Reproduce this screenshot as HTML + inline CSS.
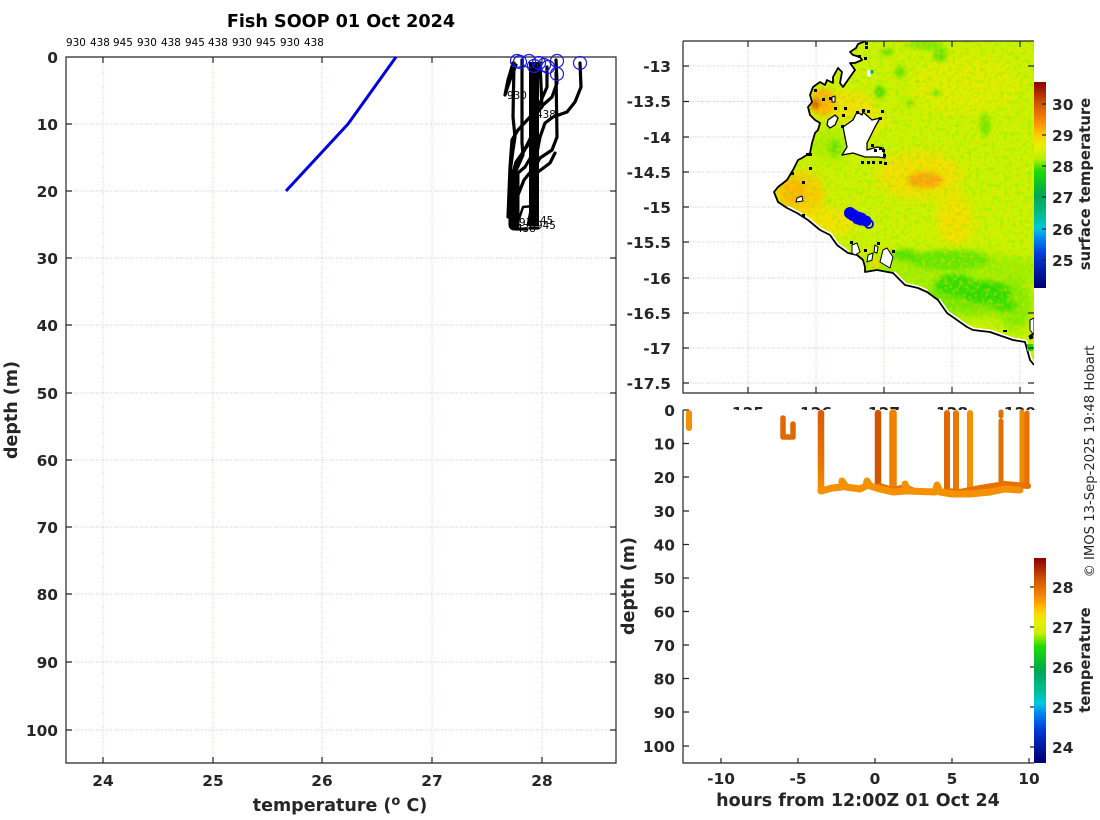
<!DOCTYPE html>
<html><head><meta charset="utf-8"><style>
html,body{margin:0;padding:0;background:#fff}
svg{display:block}
text{font-family:"DejaVu Sans","Liberation Sans",sans-serif}
.t{font-weight:bold;font-size:15.4px;fill:#262626}
.l{font-weight:bold;font-size:17.5px;fill:#262626}
.s{font-size:10.4px;fill:#000}
.gb{stroke:#b9c9f2;stroke-width:1;stroke-dasharray:1 1.5;fill:none}
.go{stroke:#eac8b4;stroke-width:1;stroke-dasharray:1 1.5;fill:none}
.ax{stroke:#262626;stroke-width:1.2;fill:none}
.p{fill:none;stroke:#000;stroke-width:3.2;stroke-linejoin:round;stroke-linecap:round}
.c{fill:none;stroke:#1a1ae6;stroke-width:1.2}
.o{fill:none;stroke-width:5;stroke-linecap:round;stroke-linejoin:round}
</style></head><body>
<svg width="1100" height="820" viewBox="0 0 1100 820" xmlns="http://www.w3.org/2000/svg">
<defs>
<linearGradient id="jet" x1="0" y1="0" x2="0" y2="1">
<stop offset="0" stop-color="#8b0000"/><stop offset=".1" stop-color="#d05000"/><stop offset=".2" stop-color="#ff9000"/><stop offset=".26" stop-color="#ffd000"/><stop offset=".31" stop-color="#e8f000"/><stop offset=".37" stop-color="#c0f000"/><stop offset=".43" stop-color="#20dc00"/><stop offset=".55" stop-color="#00a850"/><stop offset=".66" stop-color="#00c0a0"/><stop offset=".71" stop-color="#00c8e0"/><stop offset=".75" stop-color="#0090f0"/><stop offset=".83" stop-color="#0040e0"/><stop offset=".92" stop-color="#0018a0"/><stop offset="1" stop-color="#000070"/>
</linearGradient>
<linearGradient id="v1" gradientUnits="userSpaceOnUse" x1="0" y1="411" x2="0" y2="492"><stop offset="0" stop-color="#d85c00"/><stop offset=".65" stop-color="#e87400"/><stop offset="1" stop-color="#f59000"/></linearGradient>
<filter id="b6" x="-50%" y="-50%" width="200%" height="200%" color-interpolation-filters="sRGB"><feGaussianBlur stdDeviation="5"/></filter>
<filter id="b3" x="-50%" y="-50%" width="200%" height="200%" color-interpolation-filters="sRGB"><feGaussianBlur stdDeviation="2"/></filter>
<filter id="ny" x="0" y="0" width="100%" height="100%" color-interpolation-filters="sRGB"><feTurbulence type="fractalNoise" baseFrequency=".27" numOctaves="2" seed="3"/><feColorMatrix type="matrix" values="0 0 0 0 1  0 0 0 0 .85  0 0 0 0 0  2.8 0 0 0 -1.2"/></filter>
<filter id="ng" x="0" y="0" width="100%" height="100%" color-interpolation-filters="sRGB"><feTurbulence type="fractalNoise" baseFrequency=".25" numOctaves="2" seed="11"/><feColorMatrix type="matrix" values="0 0 0 0 .35  0 0 0 0 .92  0 0 0 0 0  2.4 0 0 0 -1.15"/></filter>
<clipPath id="mapc"><rect x="683" y="41" width="351" height="352"/></clipPath>
<clipPath id="sea"><path d="M866 41L858 44 856 48 850 52 853 55 860 57 862 60 855 63 850 63 855 70 850 77 843 87 840 83 842 72 838 68 833 77 833 83 827 80 825 85 820 82 813 87 810 95 812 102 808 107 810 115 815 120 820 123 818 130 815 133 812 143 810 153 802 158 798 160 793 170 787 180 778 187 774 192 778 202 787 208 797 213 808 220 820 230 830 235 837 245 848 253 857 255 863 260 865 267 865 272 877 270 893 273 905 285 918 288 927 292 938 300 947 313 967 327 973 330 990 332 1013 340 1025 342 1030 360 1034 365V41Z"/></clipPath>
</defs>
<rect width="1100" height="820" fill="#fff"/>

<!-- Left plot -->
<g class="gb"><path d="M66 124H616M66 191H616M66 258H616M66 325H616M66 393H616M66 460H616M66 527H616M66 594H616M66 662H616M66 730H616"/><path d="M322 57V763M542 57V763"/></g>
<g class="go"><path d="M103 57V763M213 57V763M432 57V763"/></g>
<path class="ax" d="M66 57H616V763H66Z"/>
<path class="ax" d="M66 124h6M66 191h6M66 258h6M66 325h6M66 393h6M66 460h6M66 527h6M66 594h6M66 662h6M66 730h6M616 124h-6M616 191h-6M616 258h-6M616 325h-6M616 393h-6M616 460h-6M616 527h-6M616 594h-6M616 662h-6M616 730h-6M103 57v6M213 57v6M322 57v6M432 57v6M542 57v6M103 763v-6M213 763v-6M322 763v-6M432 763v-6M542 763v-6"/>
<path d="M396 57L348 124 286 191" fill="none" stroke="#0000e0" stroke-width="3"/>
<g class="p">
<path d="M580 63L581 87 575 102 567 112 553 117 545 123 540 137 537 153 535 173"/>
<path d="M556 60L557 83 552 97 543 105 537 113"/>
<path d="M556 73L557 137 552 150 540 158 535 167"/>
<path d="M555 153L550 163 538 172"/>
<path d="M540 63L542 107 530 117 518 130 512 140 510 167 508 217"/>
<path d="M547 67V87L540 103 532 115"/>
<path d="M513 63L508 80 505 95 510 80 516 65"/>
<path d="M514 63L513 117 515 137 513 150 510 173"/>
<path d="M522 60V143L523 155 515 173 512 190"/>
<path d="M533 133L523 153 517 167 512 183"/>
<path d="M535 150L525 167 518 173"/>
<path d="M528 145L516 162 511 180"/>
<path d="M536 165L524 180 518 195"/>
<path d="M523 207L533 206 538 212M523 207L518 222 516 228M531 208L528 224" stroke-width="2.400"/>
<path d="M510 224L516 229H526M530 228H538"/>
<path d="M534 62V226" stroke-width="10" stroke-linecap="butt"/>
<path d="M514 175V225" stroke-width="11"/>
</g>
<g class="c"><circle cx="517" cy="61" r="6.500"/><circle cx="520" cy="62" r="6.500"/><circle cx="529" cy="61" r="6.500"/><circle cx="534" cy="66" r="6.500"/><circle cx="539" cy="63" r="6.500"/><circle cx="544" cy="65" r="6.500"/><circle cx="548" cy="67" r="6.500"/><circle cx="557" cy="61" r="6.500"/><circle cx="557" cy="74" r="6.500"/><circle cx="580" cy="63" r="6.500"/></g>
<g class="s"><text x="507" y="99">930</text><text x="536" y="118">438</text><text x="540" y="224">45</text><text x="536" y="229">945</text><text x="516" y="232">438</text><text x="519" y="226">930</text></g>
<g class="s"><text x="66" y="46">930</text><text x="90" y="46">438</text><text x="113" y="46">945</text><text x="137" y="46">930</text><text x="161" y="46">438</text><text x="185" y="46">945</text><text x="208" y="46">438</text><text x="232" y="46">930</text><text x="256" y="46">945</text><text x="280" y="46">930</text><text x="304" y="46">438</text></g>
<text x="341" y="27" text-anchor="middle" font-size="17.600" font-weight="bold" fill="#000">Fish SOOP 01 Oct 2024</text>
<g class="t" text-anchor="end"><text x="58" y="63">0</text><text x="58" y="130">10</text><text x="58" y="197">20</text><text x="58" y="264">30</text><text x="58" y="331">40</text><text x="58" y="399">50</text><text x="58" y="466">60</text><text x="58" y="533">70</text><text x="58" y="600">80</text><text x="58" y="668">90</text><text x="58" y="736">100</text></g>
<g class="t" text-anchor="middle"><text x="103" y="786">24</text><text x="213" y="786">25</text><text x="322" y="786">26</text><text x="432" y="786">27</text><text x="542" y="786">28</text></g>
<text class="l" x="340" y="811" text-anchor="middle">temperature (<tspan font-size="13" dy="-6">o</tspan><tspan dy="6"> C)</tspan></text>
<text class="l" transform="translate(17 410) rotate(-90)" text-anchor="middle">depth (m)</text>

<!-- Map -->
<g class="gb"><path d="M683 66H1034M683 101.500H1034M683 137H1034M683 172H1034M683 207H1034M683 242H1034M683 278H1034M683 313H1034M683 348H1034M683 383H1034"/><path d="M748 41V393M952 41V393M1020 41V393"/></g>
<g class="go"><path d="M816 41V393M884 41V393"/></g>
<g clip-path="url(#sea)">
<rect x="683" y="41" width="351" height="352" fill="#c8f500"/>
<g filter="url(#b6)">
<ellipse cx="965" cy="85" rx="55" ry="30" fill="#dcf000"/>
<ellipse cx="920" cy="175" rx="42" ry="24" fill="#f4e000"/>
<ellipse cx="800" cy="195" rx="24" ry="24" fill="#ffc800"/>
<ellipse cx="825" cy="222" rx="34" ry="14" fill="#f4e400"/>
<ellipse cx="955" cy="220" rx="18" ry="26" fill="#f6e000"/>
<ellipse cx="950" cy="270" rx="95" ry="18" fill="#9cf000"/>
<ellipse cx="970" cy="300" rx="55" ry="16" fill="#70e800"/>
<ellipse cx="1015" cy="305" rx="18" ry="25" fill="#80ec00"/>
<ellipse cx="830" cy="145" rx="22" ry="16" fill="#a8f000"/>
<ellipse cx="840" cy="105" rx="34" ry="14" fill="#f6e000"/>
<ellipse cx="870" cy="120" rx="20" ry="8" fill="#f0e800"/>
</g>
<g filter="url(#b3)">
<ellipse cx="925" cy="180" rx="18" ry="8" fill="#ffa010"/>
<ellipse cx="793" cy="192" rx="12" ry="12" fill="#ffb400"/>
<ellipse cx="823" cy="102" rx="12" ry="14" fill="#ffb000"/>
<ellipse cx="815" cy="104" rx="5" ry="5" fill="#d85c00"/>
<ellipse cx="880" cy="92" rx="5" ry="6" fill="#30dc00"/>
<ellipse cx="887" cy="52" rx="6" ry="3" fill="#50e000"/>
<ellipse cx="900" cy="72" rx="5" ry="6" fill="#60e400"/>
<ellipse cx="925" cy="45" rx="18" ry="4" fill="#70e800"/>
<ellipse cx="940" cy="55" rx="7" ry="7" fill="#60e400"/>
<ellipse cx="936" cy="93" rx="3" ry="3" fill="#40e000"/>
<ellipse cx="910" cy="103" rx="5" ry="2" fill="#50e000"/>
<ellipse cx="985" cy="125" rx="5" ry="12" fill="#70ea00"/>
<ellipse cx="985" cy="292" rx="26" ry="11" fill="#28dc00"/>
<ellipse cx="955" cy="285" rx="20" ry="11" fill="#30de00"/>
<ellipse cx="1005" cy="305" rx="12" ry="6" fill="#38e000"/>
<ellipse cx="835" cy="148" rx="6" ry="7" fill="#60e400"/>
<ellipse cx="950" cy="260" rx="40" ry="10" fill="#60e800"/>
<ellipse cx="905" cy="255" rx="14" ry="6" fill="#50e400"/>
<ellipse cx="875" cy="264" rx="5" ry="6" fill="#f0d800"/>
</g>
<rect x="683" y="41" width="351" height="352" filter="url(#ny)" opacity=".5"/>
<rect x="683" y="41" width="351" height="352" filter="url(#ng)" opacity=".45"/>
<rect x="870" y="70" width="3.500" height="3.500" fill="#00b050"/>
<rect x="867" y="70" width="3.500" height="7" fill="#fff"/>
</g>
<g clip-path="url(#mapc)" fill="#fff" stroke="#000" stroke-width="1.300" stroke-linejoin="round">
<path fill="none" stroke="#fff" stroke-width="5" d="M938 300L947 313 967 327 973 330 990 332 1013 340 1025 342 1030 360 1034 365M893 273L905 285 918 288 927 292M787 208L797 213 808 220 820 230 830 235 837 245 848 253"/>
<path fill="none" stroke-width="1.800" d="M866 41L858 44 856 48 850 52 853 55 860 57 862 60 855 63 850 63 855 70 850 77 843 87 840 83 842 72 838 68 833 77 833 83 827 80 825 85 820 82 813 87 810 95 812 102 808 107 810 115 815 120 820 123 818 130 815 133 812 143 810 153 802 158 798 160 793 170 787 180 778 187 774 192 778 202 787 208 797 213 808 220 820 230 830 235 837 245 848 253 857 255 863 260 865 267 865 272 877 270 893 273 905 285 918 288 927 292 938 300 947 313 967 327 973 330 990 332 1013 340 1025 342 1030 360 1034 365"/>
<path d="M843 127L853 120 857 112 862 115 863 112 872 120 880 118 875 127 870 137 867 143 867 150 877 147 883 148 885 158 878 157 865 157 853 153 842 155 847 147 845 137Z"/>
<path d="M828 120L835 115 838 118 835 125 830 128 827 125Z"/>
<path d="M832 97L835 96 835 102 832 102Z" stroke-width="1"/>
<path d="M797 198L802 196 803 201 796 202Z" stroke-width="1"/>
<path d="M852 245L857 243 860 252 855 255 852 253Z" stroke-width="1"/>
<path d="M868 255L873 253 872 260 867 262Z" stroke-width="1"/>
<path d="M875 245L878 247 877 253 874 252Z" stroke-width="1"/>
<path d="M883 250L887 248 893 257 890 268 885 265 880 262Z" stroke-width="1"/>
<path d="M1030 320L1034 318V335L1030 330Z" stroke-width="1"/>
<path d="M1029 336L1032 334 1033 338 1030 339Z" fill="#000" stroke-width="1"/>
</g>
<g fill="#000">
<rect x="865" y="42" width="3" height="3"/><rect x="865" y="46" width="3" height="3"/><rect x="858" y="55" width="3" height="3"/><rect x="864" y="57" width="3" height="3"/><rect x="814" y="89" width="3" height="3"/><rect x="822" y="98" width="3" height="3"/><rect x="829" y="97" width="3" height="3"/><rect x="834" y="107" width="3" height="3"/><rect x="844" y="107" width="3" height="3"/><rect x="842" y="114" width="3" height="3"/><rect x="841" y="125" width="3" height="3"/><rect x="856" y="111" width="3" height="3"/><rect x="862" y="109" width="3" height="3"/><rect x="867" y="110" width="3" height="3"/><rect x="881" y="110" width="3" height="3"/><rect x="879" y="117" width="3" height="3"/><rect x="871" y="144" width="3" height="3"/><rect x="874" y="149" width="3" height="3"/><rect x="879" y="147" width="3" height="3"/><rect x="882" y="149" width="3" height="3"/><rect x="883" y="154" width="3" height="3"/><rect x="861" y="161" width="3" height="3"/><rect x="867" y="161" width="3" height="3"/><rect x="872" y="161" width="3" height="3"/><rect x="879" y="161" width="3" height="3"/><rect x="884" y="162" width="3" height="3"/><rect x="806" y="153" width="3" height="3"/><rect x="809" y="153" width="3" height="3"/><rect x="809" y="167" width="3" height="3"/><rect x="802" y="181" width="3" height="3"/><rect x="791" y="172" width="3" height="3"/><rect x="802" y="214" width="3" height="3"/><rect x="850" y="241" width="3" height="3"/><rect x="864" y="249" width="3" height="3"/><rect x="877" y="242" width="3" height="3"/><rect x="892" y="250" width="3" height="3"/><rect x="1003" y="330" width="4" height="2"/>
</g>
<rect x="1027" y="344" width="6" height="7" fill="#20d800"/>
<g fill="#0000f0"><circle cx="850" cy="213" r="6"/><circle cx="853" cy="215" r="6"/><circle cx="858" cy="218" r="6.500"/><circle cx="861" cy="219" r="6.500"/><circle cx="866" cy="221" r="5.500"/></g>
<circle cx="869" cy="224" r="4" fill="none" stroke="#0000f0" stroke-width="1.800"/>
<path class="ax" d="M683 41H1034M683 41V393H1034"/>
<path class="ax" d="M683 66h6M683 101.500h6M683 137h6M683 172h6M683 207h6M683 242h6M683 278h6M683 313h6M683 348h6M683 383h6M1034 66h-6M1034 313h-6M1034 348h-6M1034 383h-6M748 41v6M816 41v6M884 41v6M952 41v6M1020 41v6M748 393v-6M816 393v-6M884 393v-6M952 393v-6M1020 393v-6"/>
<g class="t" text-anchor="end"><text x="671" y="72">-13</text><text x="671" y="107">-13.5</text><text x="671" y="143">-14</text><text x="671" y="178">-14.5</text><text x="671" y="213">-15</text><text x="671" y="248">-15.5</text><text x="671" y="284">-16</text><text x="671" y="319">-16.5</text><text x="671" y="354">-17</text><text x="671" y="389">-17.5</text></g>
<g class="t" text-anchor="middle"><text x="748" y="418">125</text><text x="816" y="418">126</text><text x="884" y="418">127</text><text x="952" y="418">128</text><text x="1020" y="418">129</text></g>
<rect x="680" y="410" width="370" height="12" fill="#fff"/>
<rect x="1034" y="82" width="12" height="206" fill="url(#jet)"/>
<path class="ax" stroke-width="1" d="M1046 104h-4M1046 135h-4M1046 166h-4M1046 197h-4M1046 229h-4M1046 260h-4"/>
<g class="t"><text x="1052" y="110">30</text><text x="1052" y="141">29</text><text x="1052" y="172">28</text><text x="1052" y="203">27</text><text x="1052" y="235">26</text><text x="1052" y="266">25</text></g>
<text transform="translate(1090 184) rotate(-90)" text-anchor="middle" font-size="14.800" font-weight="bold" fill="#262626">surface temperature</text>
<text transform="translate(1094 461.500) rotate(-90)" text-anchor="middle" font-size="13.200" fill="#262626">© IMOS 13-Sep-2025 19:48 Hobart</text>

<!-- Bottom right plot -->
<path class="ax" d="M683 410V763H1034"/>
<path class="ax" d="M683 410h6M683 443.500h6M683 477h6M683 511h6M683 544.500h6M683 578h6M683 611.500h6M683 645h6M683 678.500h6M683 712h6M683 746h6M721 763v-5M798 763v-5M875 763v-5M952 763v-5M1029 763v-5"/>
<g class="o">
<path d="M689 413V428" stroke="#f59000" stroke-width="6"/>
<path d="M783 418V437H793V424" stroke="#e06800" stroke-width="5.500"/>
<path d="M878 413V487" stroke="#d25600" stroke-width="6.500"/>
<path d="M947 413V488" stroke="#e06800" stroke-width="6"/>
<path d="M956 413V490" stroke="#e87800" stroke-width="6"/>
<path d="M1001 412V416M1001 421V485" stroke="#e07000" stroke-width="5"/>
<path d="M1027 413V486" stroke="#e87000" stroke-width="5"/>
<path d="M1022 412V485" stroke="#f08a00" stroke-width="5"/>
<path d="M970 413V490" stroke="#f59000" stroke-width="6"/>
<path d="M893 413V490" stroke="#f08000" stroke-width="7.500"/>
<path d="M821 413V491" stroke="url(#v1)" stroke-width="6.500"/>
<path d="M880 486L893 490 905 487 912 490M945 491L960 492 980 488 1005 484 1028 486" stroke="#e87000" stroke-width="6"/>
<path d="M821 491L832 488 842 487 842 481 846 487 860 489 866 486 867 481 870 486 880 489 893 492 905 491 905 484 908 491 935 492 937 485 940 492 952 494 970 494 990 492 1005 489 1020 490" stroke="#f59000" stroke-width="7"/>
</g>
<g class="t" text-anchor="end"><text x="675" y="416">0</text><text x="675" y="449.500">10</text><text x="675" y="483">20</text><text x="675" y="517">30</text><text x="675" y="550.500">40</text><text x="675" y="584">50</text><text x="675" y="617.500">60</text><text x="675" y="651">70</text><text x="675" y="684.500">80</text><text x="675" y="718">90</text><text x="675" y="752">100</text></g>
<g class="t" text-anchor="middle"><text x="721" y="784">-10</text><text x="798" y="784">-5</text><text x="875" y="784">0</text><text x="952" y="784">5</text><text x="1029" y="784">10</text></g>
<text class="l" x="858" y="806" text-anchor="middle">hours from 12:00Z 01 Oct 24</text>
<text class="l" transform="translate(634 586) rotate(-90)" text-anchor="middle">depth (m)</text>
<rect x="1034" y="558" width="12" height="205" fill="url(#jet)"/>
<path class="ax" stroke-width="1" d="M1034 587h-4M1034 627h-4M1034 667h-4M1034 707h-4M1034 747h-4"/>
<g class="t"><text x="1052" y="593">28</text><text x="1052" y="633">27</text><text x="1052" y="673">26</text><text x="1052" y="713">25</text><text x="1052" y="753">24</text></g>
<text transform="translate(1090 660) rotate(-90)" text-anchor="middle" font-size="14.800" font-weight="bold" fill="#262626">temperature</text>
</svg>
</body></html>
